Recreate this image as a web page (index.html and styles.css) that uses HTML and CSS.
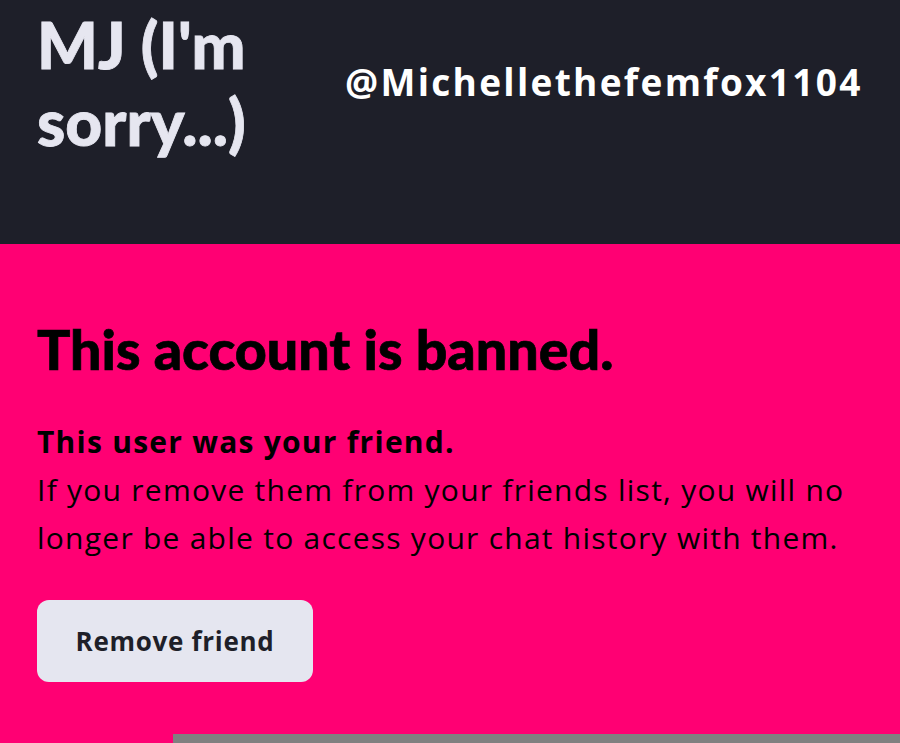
FILE: index.html
```html
<!DOCTYPE html>
<html>
<head>
<meta charset="utf-8">
<link rel="stylesheet" href="styles.css">
</head>
<body>
<div class="page">
  <header class="header">
    <h1 class="name">MJ (I'm sorry...)</h1>
    <div class="handle">@Michellethefemfox1104</div>
  </header>
  <main class="banned">
    <h2 class="banned-title">This account is banned.</h2>
    <div class="friend-note">
      <p class="friend-lead">This user was your friend.</p>
      <p class="friend-text">If you remove them from your friends list, you will no longer be able to access your chat history with them.</p>
    </div>
    <button class="remove-btn">Remove friend</button>
  </main>
  <div class="bottom-bar"></div>
</div>
</body>
</html>
```
FILE: styles.css
```css
* { box-sizing: border-box; }
html, body { margin: 0; padding: 0; }
body { width: 900px; height: 743px; overflow: hidden; background: #ff0073; font-family: "Open Sans", "Noto Sans", sans-serif; }
.page { display: flex; flex-direction: column; height: 743px; }
.header {
  background: #1e1f29;
  height: 244px;
  display: flex;
  align-items: flex-start;
  padding: 0 0 0 37px;
}
.name {
  margin: 6px 0 0 0;
  width: 240px;
  font-family: Lato, sans-serif;
  font-weight: 900;
  font-size: 64px;
  line-height: 77px;
  color: #e6e6f0;
  -webkit-text-stroke: 0.8px #e6e6f0;
}
.handle {
  margin: 58px 0 0 68px;
  font-family: "Open Sans", sans-serif;
  font-weight: 700;
  font-size: 37px;
  letter-spacing: 2.3px;
  line-height: 48px;
  color: #ffffff;
}
.banned {
  flex: 1;
  background: #ff0073;
  padding: 75px 37px 0 37px;
  display: flex;
  flex-direction: column;
  align-items: flex-start;
}
.banned-title {
  margin: 0;
  font-family: Lato, sans-serif;
  font-weight: 900;
  font-size: 55.5px;
  line-height: 60px;
  color: #000;
  -webkit-text-stroke: 0.7px #000;
}
.friend-note {
  margin-top: 39px;
  font-family: "Open Sans", sans-serif;
  font-size: 30px;
  line-height: 48px;
  color: #000;
}
.friend-note p { margin: 0; }
.friend-lead { font-weight: 700; letter-spacing: 1.25px; }
.friend-text { font-weight: 400; letter-spacing: 1.25px; }
.remove-btn {
  margin-top: 38px;
  width: 276px;
  height: 82px;
  border: none;
  border-radius: 12px;
  background: #e5e6f0;
  color: #1e1f29;
  font-family: "Open Sans", sans-serif;
  font-weight: 700;
  font-size: 26px;
  letter-spacing: 0.7px;
}
.bottom-bar {
  height: 9px;
  margin-left: 173px;
  background: #808080;
  flex: none;
}
```
